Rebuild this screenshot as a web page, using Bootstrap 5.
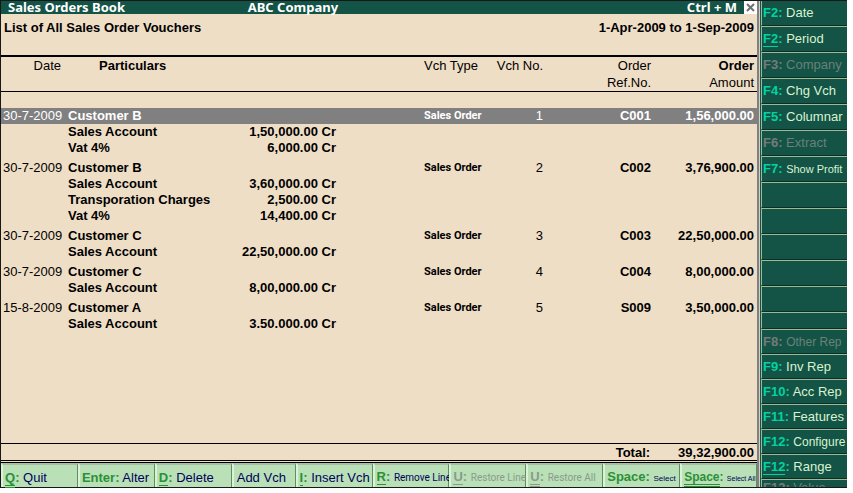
<!DOCTYPE html>
<html lang="en">
<head>
<meta charset="utf-8">
<meta name="viewport" content="width=device-width, initial-scale=1">
<title>Sales Orders Book</title>
<link href="https://cdn.jsdelivr.net/npm/bootstrap@5.3.0/dist/css/bootstrap.min.css" rel="stylesheet">
<style>
body{font:13px/16px "Liberation Sans",Arial,sans-serif;color:#000;background:#fff;padding:0 6px 5px 0}
.screen{min-height:calc(100vh - 5px);background:#efdec6;border:1px solid #181818;border-right:0}
.report{border-right:2px solid #808080;min-width:0}
.titlebar{background:#135446;color:#fff;font:bold 13px/13px "Noto Sans",sans-serif;height:13px;padding-left:7px}
.titlebar h1,.titlebar h2{font:inherit;margin:0}
.titlebar h1{width:32%}
.close-box{background:#fff;width:13px;height:13px;line-height:0;color:#707070;border:0;margin-left:7px}
.subhead{height:41px;padding:6px 3px 0;font-weight:bold}
.vouchers{table-layout:fixed;border-collapse:separate;border-spacing:0;width:100%}
.vouchers th,.vouchers td{padding:0;vertical-align:top;white-space:nowrap}
.vouchers thead th{font-weight:normal;line-height:17px;height:36px;border-top:2px solid #000;border-bottom:1px solid #000}
.vouchers thead .strong,.vouchers td{font-weight:bold}
.vouchers td.thin{font-weight:normal}
.c-date{width:67px}.c-sum{width:100px}.c-type{width:149px}.c-no{width:58px}.c-ref{width:108px}.c-amt{width:106px}
.vouchers .date{padding-left:2px}
.vouchers .hd-date{padding-right:7px}
.vouchers .hd-part{padding-left:31px}
.vouchers .type{padding-left:88px}
.vouchers .last{padding-right:3px}
.vouchers .spacer td{height:16px}
.vouchers .vgap td{height:4px}
.vouchers .sel td{background:#808080;color:#fff}
.vouchers td.type{font-family:Roboto,"Liberation Sans",sans-serif;font-size:11px}
.total{border-top:1px solid #000;border-bottom:1px solid #000;height:18px;padding:1px 3px 0 0;font-weight:bold;gap:28px}
.cmds{border-top:1px solid #000;margin-top:1px;background:#b9e0b7}
.cmds button{flex:77 1 0;min-width:0;height:24px;white-space:nowrap;text-align:left;background:#b9e0b7;color:#00005c;padding:3px 0 0 2px;border:solid;border-width:2px 1px 0 2px;border-color:#a8bda6 #5f8f5f #fff #d9f2d8}
.cmds .narrowcmd{flex-grow:62;padding-left:3px}
.cmds b{color:#2a9134}
.cmds .off,.cmds .off b{color:#8b9b8b}
.ul1{border-bottom:1px solid}
.ul2{border-bottom:3px double}
.fs-12{font-size:12px}
.fs-11{font-size:11px}
.fs-10{font-family:Roboto,"Liberation Sans",sans-serif;font-size:10px}
.fs-8{font-size:8px}
.fs-7{font-size:7px}
.keys{width:88px;background:#135446;border-left:1px solid #d0d0c8;padding-left:1px}
.keys button{height:26px;flex:none;white-space:nowrap;text-align:left;background:#135446;color:#d9f2d0;padding:0 0 0 1px;border:solid;border-width:1px 0 1px 1px;border-color:#9dba94 #0b2f28 #0b2f28 #9dba94}
.keys .first{height:25px;border-top-width:0}
.keys .low{height:25px}
.keys .short{height:17px}
.keys .cut{height:8px;border-bottom:0;overflow:hidden}
.keys b{color:#00d3a1}
.keys .off b{color:#777b78}
.keys .off{color:#6b8078}
</style>
<script src="https://cdn.jsdelivr.net/npm/bootstrap@5.3.0/dist/js/bootstrap.bundle.min.js"></script>
</head>
<body>
<div class="screen d-flex">
  <main class="report flex-grow-1 d-flex flex-column">
    <header class="titlebar d-flex">
      <h1>Sales Orders Book</h1>
      <h2>ABC Company</h2>
      <span class="ms-auto">Ctrl + M</span>
      <button class="close-box p-0" type="button" aria-label="Close"><svg width="13" height="13" viewBox="0 0 13 13"><path d="M3 3l7 7M10 3l-7 7" stroke="currentColor" stroke-width="2"/></svg></button>
    </header>
    <div class="subhead d-flex justify-content-between"><span>List of All Sales Order Vouchers</span><span>1-Apr-2009 to 1-Sep-2009</span></div>
    <table class="vouchers">
      <colgroup><col class="c-date"><col><col class="c-sum"><col class="c-type"><col class="c-no"><col class="c-ref"><col class="c-amt"></colgroup>
      <thead><tr><th class="text-end hd-date">Date</th><th class="strong hd-part">Particulars</th><th></th><th class="type">Vch Type</th><th class="text-end">Vch No.</th><th class="text-end">Order<br>Ref.No.</th><th class="text-end last"><b>Order</b><br>Amount</th></tr></thead>
      <tbody>
        <tr class="spacer"><td colspan="7"></td></tr>
        <tr class="sel"><td class="thin date">30-7-2009</td><td>Customer B</td><td></td><td class="type">Sales Order</td><td class="thin text-end">1</td><td class="text-end">C001</td><td class="text-end last">1,56,000.00</td></tr>
        <tr><td></td><td>Sales Account</td><td class="text-end">1,50,000.00 Cr</td><td colspan="4"></td></tr>
        <tr><td></td><td>Vat 4%</td><td class="text-end">6,000.00 Cr</td><td colspan="4"></td></tr>
        <tr class="vgap"><td colspan="7"></td></tr>
        <tr><td class="thin date">30-7-2009</td><td>Customer B</td><td></td><td class="type">Sales Order</td><td class="thin text-end">2</td><td class="text-end">C002</td><td class="text-end last">3,76,900.00</td></tr>
        <tr><td></td><td>Sales Account</td><td class="text-end">3,60,000.00 Cr</td><td colspan="4"></td></tr>
        <tr><td></td><td>Transporation Charges</td><td class="text-end">2,500.00 Cr</td><td colspan="4"></td></tr>
        <tr><td></td><td>Vat 4%</td><td class="text-end">14,400.00 Cr</td><td colspan="4"></td></tr>
        <tr class="vgap"><td colspan="7"></td></tr>
        <tr><td class="thin date">30-7-2009</td><td>Customer C</td><td></td><td class="type">Sales Order</td><td class="thin text-end">3</td><td class="text-end">C003</td><td class="text-end last">22,50,000.00</td></tr>
        <tr><td></td><td>Sales Account</td><td class="text-end">22,50,000.00 Cr</td><td colspan="4"></td></tr>
        <tr class="vgap"><td colspan="7"></td></tr>
        <tr><td class="thin date">30-7-2009</td><td>Customer C</td><td></td><td class="type">Sales Order</td><td class="thin text-end">4</td><td class="text-end">C004</td><td class="text-end last">8,00,000.00</td></tr>
        <tr><td></td><td>Sales Account</td><td class="text-end">8,00,000.00 Cr</td><td colspan="4"></td></tr>
        <tr class="vgap"><td colspan="7"></td></tr>
        <tr><td class="thin date">15-8-2009</td><td>Customer A</td><td></td><td class="type">Sales Order</td><td class="thin text-end">5</td><td class="text-end">S009</td><td class="text-end last">3,50,000.00</td></tr>
        <tr><td></td><td>Sales Account</td><td class="text-end">3.50.000.00 Cr</td><td colspan="4"></td></tr>
      </tbody>
    </table>
    <div class="total d-flex justify-content-end mt-auto"><span>Total:</span><span>39,32,900.00</span></div>
    <nav class="cmds d-flex" aria-label="Commands">
      <button type="button"><b><span class="ul2">Q</span>:</b> Quit</button>
      <button type="button"><b>Enter:</b> Alter</button>
      <button type="button"><b><span class="ul1">D</span>:</b> Delete</button>
      <button type="button" class="narrowcmd">Add Vch</button>
      <button type="button"><b><span class="ul1">I</span>:</b> Insert Vch</button>
      <button type="button"><b><span class="ul1">R</span>:</b> <span class="fs-10">Remove Line</span></button>
      <button type="button" class="off"><b><span class="ul1">U</span>:</b> <span class="fs-10">Restore Line</span></button>
      <button type="button" class="off"><b><span class="ul2">U</span>:</b> <span class="fs-10">Restore All</span></button>
      <button type="button"><b>Space:</b> <span class="fs-8">Select</span></button>
      <button type="button" class="fs-12"><b><span class="ul2">Space</span>:</b> <span class="fs-7">Select All</span></button>
    </nav>
  </main>
  <nav class="keys d-flex flex-column flex-shrink-0" aria-label="Function keys">
    <button type="button" class="first"><b>F2:</b> Date</button>
    <button type="button"><b><span class="ul1">F2</span>:</b> Period</button>
    <button type="button" class="off"><b>F3:</b> Company</button>
    <button type="button"><b>F4:</b> Chg Vch</button>
    <button type="button"><b>F5:</b> Columnar</button>
    <button type="button" class="off"><b>F6:</b> Extract</button>
    <button type="button"><b>F7:</b> <span class="fs-11">Show Profit</span></button>
    <button type="button" aria-label="Unassigned"></button>
    <button type="button" aria-label="Unassigned"></button>
    <button type="button" aria-label="Unassigned"></button>
    <button type="button" aria-label="Unassigned"></button>
    <button type="button" aria-label="Unassigned"></button>
    <button type="button" class="short" aria-label="Unassigned"></button>
    <button type="button" class="low off"><b>F8:</b> <span class="fs-12">Other Rep</span></button>
    <button type="button" class="low"><b>F9:</b> Inv Rep</button>
    <button type="button" class="low"><b>F10:</b> Acc Rep</button>
    <button type="button" class="low"><b>F11:</b> Features</button>
    <button type="button" class="low"><b>F12:</b> <span class="fs-12">Configure</span></button>
    <button type="button" class="low"><b><span class="ul1">F12</span>:</b> Range</button>
    <button type="button" class="cut off"><b>F12:</b> Value</button>
  </nav>
</div>
</body>
</html>
